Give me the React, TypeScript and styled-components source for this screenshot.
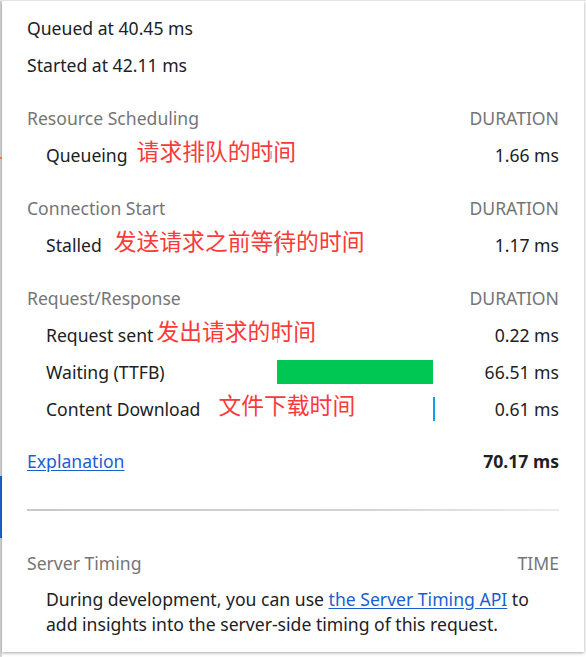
import React from "react";
import styled, { createGlobalStyle } from "styled-components";

const Global = createGlobalStyle`
  html, body { margin: 0; padding: 0; background: #ffffff; }
  body { font-family: "Noto Sans", "Open Sans", sans-serif; color: #202124; }
`;

const Page = styled.div`
  display: flex;
  width: 586px;
  height: 657px;
  overflow: hidden;
  border-top: 1px solid #e4e4e4;
  box-sizing: border-box;
`;

const Edge = styled.div`
  width: 2px;
  flex: none;
  background: #d6d6d6;
  display: flex;
  flex-direction: column;
`;

const EdgeMark = styled.div<{ $top: number; $h: number; $c: string }>`
  margin-top: ${(p) => p.$top}px;
  height: ${(p) => p.$h}px;
  background: ${(p) => p.$c};
`;

const Panel = styled.div`
  width: 582px;
  height: 651px;
  box-sizing: border-box;
  padding: 8px 25px 0 25px;
  background: #fff;
  box-shadow: 0 1px 3px rgba(0, 0, 0, 0.35);
  font-size: 17.6px;
`;

const InfoLine = styled.div`
  height: 37px;
  display: flex;
  align-items: center;
`;

const Section = styled.div`
  margin-top: 16px;
`;

const Row = styled.div`
  display: grid;
  grid-template-columns: 243px 166px 1fr;
  height: 37px;
  align-items: center;
`;

const HeadLabel = styled.div`
  color: #757575;
  grid-column: 1 / 3;
`;

const HeadRight = styled.div`
  color: #757575;
  text-align: right;
`;

const Label = styled.div`
  padding-left: 19px;
  white-space: nowrap;
  display: flex;
  align-items: center;
  position: relative;
  z-index: 2;
`;

const Note = styled.span<{ $gap: number }>`
  margin-left: ${(p) => p.$gap}px;
  color: #fb3a3a;
  font-family: "Noto Sans CJK SC", sans-serif;
  font-size: 22.8px;
  line-height: 1;
  position: relative;
  top: -3px;
`;

const Track = styled.div`
  height: 37px;
  position: relative;
`;

const Bar = styled.div<{ $color: string; $h: number }>`
  position: absolute;
  top: 50%;
  height: ${(p) => p.$h}px;
  transform: translateY(-50%);
  background: ${(p) => p.$color};
`;

const Value = styled.div`
  text-align: right;
`;

const Total = styled.div`
  text-align: right;
  font-weight: 700;
`;

const Link = styled.a`
  color: #1a5fcf;
  text-decoration: underline;
  text-underline-offset: 2px;
`;

const Summary = styled(Row)`
  margin-top: 15px;
`;

const Divider = styled.div`
  margin-top: 30px;
  height: 2px;
  background: linear-gradient(to right, #c8c8c8, #d2d2d2 60%, #ececec);
`;

const ServerSection = styled.div`
  margin-top: 33px;
`;

const Paragraph = styled.p`
  margin: 6px 0 0 0;
  padding-left: 19px;
  max-width: 500px;
  line-height: 25px;
`;

type Item = {
  label: string;
  note?: string;
  gap?: number;
  value: string;
  bar?: { left: number; width: number; color: string; h: number };
};

const sections: { title: string; items: Item[] }[] = [
  {
    title: "Resource Scheduling",
    items: [
      {
        label: "Queueing",
        note: "请求排队的时间",
        gap: 9,
        value: "1.66 ms",
        bar: { left: 0, width: 2, color: "#bdbdbd", h: 8 },
      },
    ],
  },
  {
    title: "Connection Start",
    items: [
      {
        label: "Stalled",
        note: "发送请求之前等待的时间",
        gap: 12,
        value: "1.17 ms",
        bar: { left: 6, width: 2, color: "#b0b0b0", h: 22 },
      },
    ],
  },
  {
    title: "Request/Response",
    items: [
      {
        label: "Request sent",
        note: "发出请求的时间",
        gap: 3,
        value: "0.22 ms",
        bar: { left: 7, width: 1, color: "#bdbdbd", h: 16 },
      },
      {
        label: "Waiting (TTFB)",
        value: "66.51 ms",
        bar: { left: 7, width: 156, color: "#00c653", h: 24 },
      },
      {
        label: "Content Download",
        note: "文件下载时间",
        gap: 18,
        value: "0.61 ms",
        bar: { left: 163, width: 2, color: "#129eea", h: 24 },
      },
    ],
  },
];

export default function App() {
  return (
    <>
      <Global />
      <Page>
        <Edge>
          <EdgeMark $top={156} $h={2} $c="#f08a4b" />
          <EdgeMark $top={317} $h={62} $c="#1a66d2" />
        </Edge>
        <Panel>
          <InfoLine>Queued at 40.45 ms</InfoLine>
          <InfoLine>Started at 42.11 ms</InfoLine>
          {sections.map((s) => (
            <Section key={s.title}>
              <Row>
                <HeadLabel>{s.title}</HeadLabel>
                <HeadRight>DURATION</HeadRight>
              </Row>
              {s.items.map((it) => (
                <Row key={it.label}>
                  <Label>
                    {it.label}
                    {it.note && <Note $gap={it.gap ?? 10}>{it.note}</Note>}
                  </Label>
                  <Track>
                    {it.bar && (
                      <Bar
                        $color={it.bar.color}
                        $h={it.bar.h}
                        style={{ left: it.bar.left, width: it.bar.width }}
                      />
                    )}
                  </Track>
                  <Value>{it.value}</Value>
                </Row>
              ))}
            </Section>
          ))}
          <Summary>
            <div>
              <Link href="#">Explanation</Link>
            </div>
            <div />
            <Total>70.17 ms</Total>
          </Summary>
          <Divider />
          <ServerSection>
            <Row>
              <HeadLabel>Server Timing</HeadLabel>
              <HeadRight>TIME</HeadRight>
            </Row>
            <Paragraph>
              During development, you can use{" "}
              <Link href="#">the Server Timing API</Link> to add insights into
              the server-side timing of this request.
            </Paragraph>
          </ServerSection>
        </Panel>
      </Page>
    </>
  );
}
